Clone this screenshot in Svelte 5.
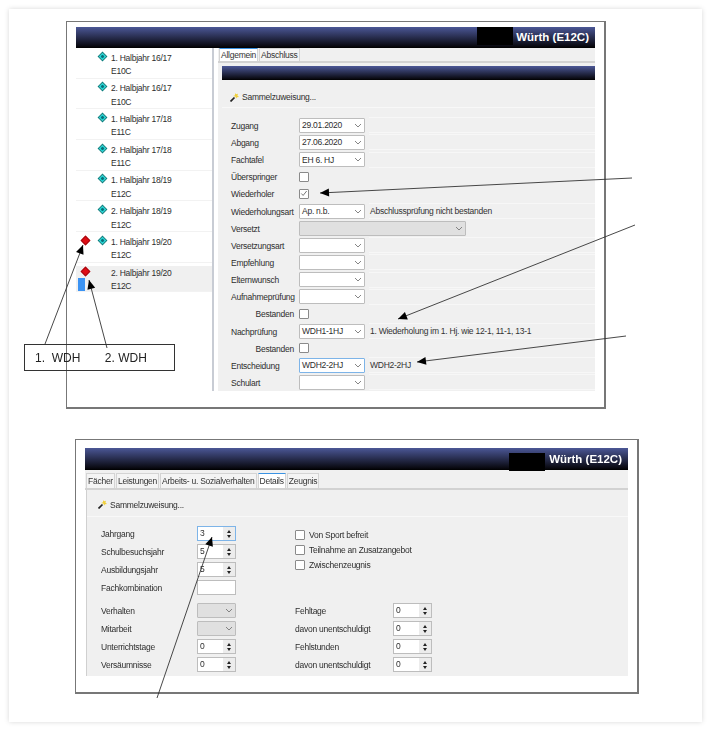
<script>
	const terms = [
		['1. Halbjahr 16/17', 'E10C'],
		['2. Halbjahr 16/17', 'E10C'],
		['1. Halbjahr 17/18', 'E11C'],
		['2. Halbjahr 17/18', 'E11C'],
		['1. Halbjahr 18/19', 'E12C'],
		['2. Halbjahr 18/19', 'E12C'],
		['1. Halbjahr 19/20', 'E12C', 'red', 'cyan'],
		['2. Halbjahr 19/20', 'E12C', 'red', null, true]
	];

	// type: date/select = dropdown, check, wide, none
	const fields = [
		{ label: 'Zugang', value: '29.01.2020' },
		{ label: 'Abgang', value: '27.06.2020' },
		{ label: 'Fachtafel', value: 'EH 6. HJ', strip: true },
		{ label: 'Überspringer', type: 'check' },
		{ label: 'Wiederholer', type: 'check', checked: true },
		{ label: 'Wiederholungsart', value: 'Ap. n.b.', note: 'Abschlussprüfung nicht bestanden' },
		{ label: 'Versetzt', type: 'wide' },
		{ label: 'Versetzungsart', strip: true },
		{ label: 'Empfehlung', strip: true },
		{ label: 'Elternwunsch', strip: true },
		{ label: 'Aufnahmeprüfung', strip: true },
		{ label: 'Bestanden', type: 'check', right: true },
		{ label: 'Nachprüfung', value: 'WDH1-1HJ', note: '1. Wiederholung im 1. Hj. wie 12-1, 11-1, 13-1' },
		{ label: 'Bestanden', type: 'check', right: true },
		{ label: 'Entscheidung', value: 'WDH2-2HJ', note: 'WDH2-2HJ', focus: true },
		{ label: 'Schulart', strip: true }
	];

	const tabsTop = ['Allgemein', 'Abschluss'];
	const tabsBottom = ['Fächer', 'Leistungen', 'Arbeits- u. Sozialverhalten', 'Details', 'Zeugnis'];

	const detailsTop = [
		{ label: 'Jahrgang', value: '3', spin: true, focus: true },
		{ label: 'Schulbesuchsjahr', value: '5', spin: true },
		{ label: 'Ausbildungsjahr', value: '5', spin: true },
		{ label: 'Fachkombination', value: '' }
	];
	const detailsLeft = [
		{ label: 'Verhalten', disabled: true },
		{ label: 'Mitarbeit', disabled: true },
		{ label: 'Unterrichtstage', value: '0', spin: true },
		{ label: 'Versäumnisse', value: '0', spin: true }
	];
	const detailsRight = ['Fehltage', 'davon unentschuldigt', 'Fehlstunden', 'davon unentschuldigt'];
	const checks = ['Von Sport befreit', 'Teilnahme an Zusatzangebot', 'Zwischenzeugnis'];

	const arrows = [
		[632, 178, 320, 193],
		[635, 225, 398, 319],
		[626, 336, 417, 362],
		[45, 344, 83, 245],
		[107, 348, 89, 280],
		[157, 698, 212, 537]
	];

	function head([x1, y1, x2, y2]) {
		const a = Math.atan2(y2 - y1, x2 - x1);
		const l = 9, w = 4;
		const bx = x2 - l * Math.cos(a), by = y2 - l * Math.sin(a);
		const nx = -Math.sin(a) * w, ny = Math.cos(a) * w;
		return `${x2},${y2} ${bx + nx},${by + ny} ${bx - nx},${by - ny}`;
	}
</script>

{#snippet chevron()}
	<svg class="chev" viewBox="0 0 8 5" width="8" height="5"><path d="M1 1l3 3 3-3" fill="none" stroke="#777" stroke-width="0.9" /></svg>
{/snippet}

{#snippet select(value, focus, disabled)}
	<div class="select" class:focus class:disabled>
		<span>{value ?? ''}</span>
		{@render chevron()}
	</div>
{/snippet}

{#snippet spinner(value, focus)}
	<div class="spin" class:focus>
		<span>{value}</span>
		<div class="spin-btns">
			<i class="up"></i>
			<i class="down"></i>
		</div>
	</div>
{/snippet}

{#snippet check(checked)}
	<div class="check">
		{#if checked}
			<svg viewBox="0 0 9 9" width="9" height="9"><path d="M1.5 4.5l2 2.2 4-5" fill="none" stroke="#555" stroke-width="0.9" /></svg>
		{/if}
	</div>
{/snippet}

{#snippet wand()}
	<svg class="wand" viewBox="0 0 9 9" width="9" height="9">
		<path d="M.5 8.5l4-4" stroke="#222" stroke-width="1.7" />
		<path d="M5 0l1 1.3 2-.5-.6 1.8L9 4l-1.9.2-1 1.3-.5-1.8L3.2 3l1.8-.8z" fill="#f0cf3a" />
	</svg>
{/snippet}

{#snippet titlebar(cls)}
	<div class="titlebar {cls}">
		<div class="redact"></div>
		<b>Würth (E12C)</b>
	</div>
{/snippet}

<div class="page">
	<div class="sheet">
		<section class="shot first">
			{@render titlebar('')}
			<div class="split">
				<ul class="terms">
					{#each terms as [name, cls, left, right, selected]}
						<li class:selected>
							<div class="marks">
								{#if left}<span class="gem red"></span>{/if}
								{#if selected}<span class="bar"></span>{/if}
							</div>
							<div class="mark2">
								{#if !left || right}<span class="gem cyan"></span>{/if}
							</div>
							<div class="term-text">
								<span>{name}</span>
								<span>{cls}</span>
							</div>
						</li>
					{/each}
				</ul>
				<div class="detail">
					<div class="tabs">
						{#each tabsTop as t, i}
							<div class="tab" class:active={i === 0}>{t}</div>
						{/each}
					</div>
					<div class="pane">
						<div class="subbar"></div>
						<div class="action">{@render wand()}<span>Sammelzuweisung...</span></div>
						<div class="form">
							{#each fields as f}
								<div class="label" class:right={f.right}>{f.label}</div>
								{#if f.type === 'check'}
									<div class="ctl">{@render check(f.checked)}</div>
								{:else if f.type === 'wide'}
									<div class="ctl wide">{@render select('', false, true)}</div>
								{:else}
									<div class="ctl">{@render select(f.value, f.focus)}</div>
									<div class="note" class:blank={!f.note && !f.strip}>{f.note ?? ''}</div>
								{/if}
							{/each}
						</div>
					</div>
				</div>
			</div>
		</section>

		<section class="shot second">
			{@render titlebar('low')}
			<div class="tabs wide-tabs">
				{#each tabsBottom as t}
					<div class="tab" class:active={t === 'Details'}>{t}</div>
				{/each}
			</div>
			<div class="pane2">
				<div class="action action2">{@render wand()}<span>Sammelzuweisung...</span></div>
				<div class="upper">
					<div class="rows">
						{#each detailsTop as d}
							<div class="row">
								<div class="dl">{d.label}</div>
								{#if d.spin}
									{@render spinner(d.value, d.focus)}
								{:else}
									<div class="plain"></div>
								{/if}
							</div>
						{/each}
					</div>
					<div class="checks">
						{#each checks as c}
							<div class="check-row">{@render check(false)}<span>{c}</span></div>
						{/each}
					</div>
				</div>
				<div class="lower">
					<div class="rows">
						{#each detailsLeft as d}
							<div class="row">
								<div class="dl">{d.label}</div>
								{#if d.spin}
									{@render spinner(d.value)}
								{:else}
									{@render select('', false, true)}
								{/if}
							</div>
						{/each}
					</div>
					<div class="rows">
						{#each detailsRight as label}
							<div class="row">
								<div class="dl">{label}</div>
								{@render spinner('0')}
							</div>
						{/each}
					</div>
				</div>
			</div>
		</section>

		<div class="callout">
			<span>1.&nbsp; WDH</span>
			<span>2. WDH</span>
		</div>
	</div>

	<svg class="arrows" viewBox="0 0 709 729" width="709" height="729">
		{#each arrows as a}
			<line x1={a[0]} y1={a[1]} x2={a[2]} y2={a[3]} stroke="#333" stroke-width="0.9" />
			<polygon points={head(a)} fill="#000" />
		{/each}
	</svg>
</div>

<style>
	:global(body) {
		background: #fff;
	}
	.page {
		position: relative;
		width: 709px;
		height: 729px;
		overflow: hidden;
		padding: 9px 0 0 9px;
		box-sizing: border-box;
		font-family: 'Liberation Sans', Arial, sans-serif;
		font-size: 8.5px;
		letter-spacing: -0.25px;
		color: #2e2e2e;
		filter: blur(0.3px);
	}
	.sheet {
		position: relative;
		width: 693px;
		height: 713px;
		box-sizing: border-box;
		padding-top: 12px;
		box-shadow: 0 0 5px #d8d8d8;
		background: #fff;
	}
	.shot {
		box-sizing: border-box;
		border: 1px solid #777;
		border-right-width: 2px;
		border-bottom-width: 2px;
		background: #fff;
	}
	.first {
		width: 540px;
		height: 388px;
		margin-left: 57px;
		padding: 5px 9px 0 9px;
	}
	.second {
		width: 564px;
		height: 255px;
		margin: 30px 0 0 66px;
		padding: 8px 9px 0 9px;
	}
	.titlebar {
		height: 21px;
		background: linear-gradient(#4b5796, #0a0a12 90%, #000);
		display: flex;
		justify-content: flex-end;
		align-items: center;
		gap: 3px;
		padding-right: 6px;
		color: #fff;
		font-size: 11.5px;
		letter-spacing: 0;
	}
	.titlebar b {
		padding-bottom: 1px;
	}
	.redact {
		width: 36px;
		height: 18px;
		margin-top: -3px;
		background: #000;
	}
	.titlebar.low {
		height: 22px;
		gap: 4px;
	}
	.titlebar.low .redact {
		height: 18px;
		margin-top: 5px;
	}
	.split {
		display: flex;
		height: 343px;
	}
	.terms {
		list-style: none;
		margin: 0;
		padding: 0;
		width: 136px;
		height: 245px;
		flex: none;
	}
	.terms li {
		height: 30.7px;
		box-sizing: border-box;
		border-bottom: 1px solid #f2f2f2;
		display: flex;
		padding-top: 3.5px;
	}
	.terms li.selected {
		background: #f0f0f0;
		height: 26px;
		margin-top: 3px;
		padding-top: 1px;
	}
	.marks {
		width: 18px;
		padding-left: 2px;
		box-sizing: border-box;
		position: relative;
		display: flex;
		flex-direction: column;
		align-items: flex-start;
	}
	.mark2 {
		width: 17px;
		padding-left: 1.5px;
		box-sizing: border-box;
	}
	.gem {
		display: block;
		width: 7px;
		height: 7px;
		transform: rotate(45deg);
		margin: 1px 0 0 3.5px;
		border: 1px solid #0a7d7d;
		box-sizing: border-box;
	}
	.gem.cyan {
		background: radial-gradient(circle, #0b6f78 0 1.2px, #16d6d6 1.6px);
	}
	.gem.red {
		background: #e00c14;
		border-color: #a40a10;
	}
	.bar {
		display: block;
		width: 7px;
		height: 13px;
		margin-top: 3px;
		background: #3b93f3;
	}
	.term-text {
		display: flex;
		flex-direction: column;
		gap: 3.6px;
		line-height: 10px;
		margin-top: 1px;
	}
	.detail {
		flex: 1;
		border-left: 2px solid #c8ccd4;
		padding-left: 4px;
		display: flex;
		flex-direction: column;
	}
	.tabs {
		display: flex;
		gap: 1px;
		height: 13px;
		background: #f0f0f0;
		border-bottom: 2px solid #d2d2d2;
		padding-left: 1px;
		align-items: flex-end;
	}
	.tab {
		padding: 0 1px;
		line-height: 13px;
		height: 13px;
		box-sizing: border-box;
		border: 1px solid #d4d4d4;
		border-bottom: none;
		background: #f4f4f4;
		color: #333;
	}
	.tab.active {
		background: #fff;
		border-top: 1px solid #3b93e3;
	}
	.pane {
		background: #f0f0f0;
		padding-left: 4px;
		display: flex;
		flex-direction: column;
		height: 328px;
		box-sizing: border-box;
	}
	.subbar {
		height: 14px;
		margin-top: 3px;
		background: linear-gradient(#4b5796, #0a0a12 90%, #000);
	}
	.action {
		height: 28px;
		display: flex;
		align-items: center;
		gap: 3px;
		padding: 8px 0 0 8px;
		border-bottom: 1px solid #f8f8f8;
		box-sizing: border-box;
	}
	.form {
		display: grid;
		grid-template-columns: 68px 66px 1fr;
		grid-auto-rows: 17.15px;
		padding: 9px 0 0 9px;
		align-items: center;
	}
	.label {
		padding-top: 1px;
	}
	.label.right {
		text-align: right;
		padding-right: 5px;
	}
	.ctl {
		display: flex;
		align-items: center;
		height: 100%;
	}
	.ctl:has(.check) {
		grid-column: 2 / 4;
	}
	.ctl.wide {
		grid-column: 2 / 4;
	}
	.ctl.wide .select {
		width: 167px;
	}
	.note {
		height: 14px;
		line-height: 14px;
		margin-left: 4px;
		border-top: 1px solid #f7f7f7;
		border-bottom: 1px solid #f7f7f7;
		padding-left: 1px;
		color: #333;
	}
	.select {
		width: 66px;
		height: 15px;
		box-sizing: border-box;
		border: 1px solid #bdbdbd;
		background: #fff;
		display: flex;
		align-items: center;
		justify-content: space-between;
		padding: 0 2px;
		border-radius: 1px;
	}
	.select.focus,
	.spin.focus {
		border-color: #7db4e8;
	}
	.select.disabled {
		background: #e0e0e0;
	}
	.chev {
		flex: none;
	}
	.check {
		width: 10px;
		height: 10px;
		box-sizing: border-box;
		border: 1px solid #8a8a8a;
		background: #fff;
		border-radius: 1px;
		flex: none;
		display: flex;
		align-items: center;
		justify-content: center;
	}
	.wide-tabs {
		height: 18px;
	}
	.wide-tabs .tab {
		height: 15px;
		line-height: 14px;
	}
	.pane2 {
		height: 186px;
		background: #f0f0f0;
		border-left: 1px solid #d0d0d0;
		margin-left: 1px;
		box-sizing: border-box;
	}
	.action2 {
		height: 27px;
		padding: 3px 0 0 11px;
	}
	.upper {
		display: flex;
		gap: 59px;
		padding: 9px 0 0 14px;
	}
	.lower {
		display: flex;
		gap: 59px;
		padding: 8px 0 0 14px;
	}
	.rows {
		display: flex;
		flex-direction: column;
		gap: 3px;
	}
	.row {
		display: grid;
		grid-template-columns: 96px 39px;
		align-items: center;
		height: 15px;
	}
	.dl {
		padding-top: 1px;
	}
	.lower .rows + .rows .row {
		grid-template-columns: 98px 39px;
	}
	.plain {
		width: 39px;
		height: 15px;
		box-sizing: border-box;
		border: 1px solid #bdbdbd;
		background: #fff;
	}
	.row .select {
		width: 39px;
	}
	.spin {
		width: 39px;
		height: 15px;
		box-sizing: border-box;
		border: 1px solid #bdbdbd;
		background: #fff;
		display: flex;
		justify-content: space-between;
		padding-left: 2px;
		line-height: 12px;
	}
	.spin-btns {
		width: 12px;
		background: #ececec;
		display: flex;
		flex-direction: column;
		align-items: center;
		justify-content: center;
		gap: 2px;
	}
	.spin-btns i {
		width: 0;
		height: 0;
		border-left: 2.5px solid transparent;
		border-right: 2.5px solid transparent;
	}
	.spin-btns .up {
		border-bottom: 3px solid #222;
	}
	.spin-btns .down {
		border-top: 3px solid #222;
	}
	.checks {
		display: flex;
		flex-direction: column;
		gap: 5px;
		padding-top: 4px;
	}
	.check-row {
		display: flex;
		align-items: center;
		gap: 4px;
		height: 10px;
	}
	.callout {
		position: absolute;
		left: 15px;
		top: 335px;
		width: 151px;
		height: 27px;
		box-sizing: border-box;
		border: 1px solid #333;
		display: flex;
		gap: 24.5px;
		align-items: center;
		padding-left: 10px;
		font-size: 12px;
		letter-spacing: 0;
		color: #222;
	}
	.arrows {
		position: absolute;
		left: 0;
		top: 0;
		pointer-events: none;
	}
</style>
